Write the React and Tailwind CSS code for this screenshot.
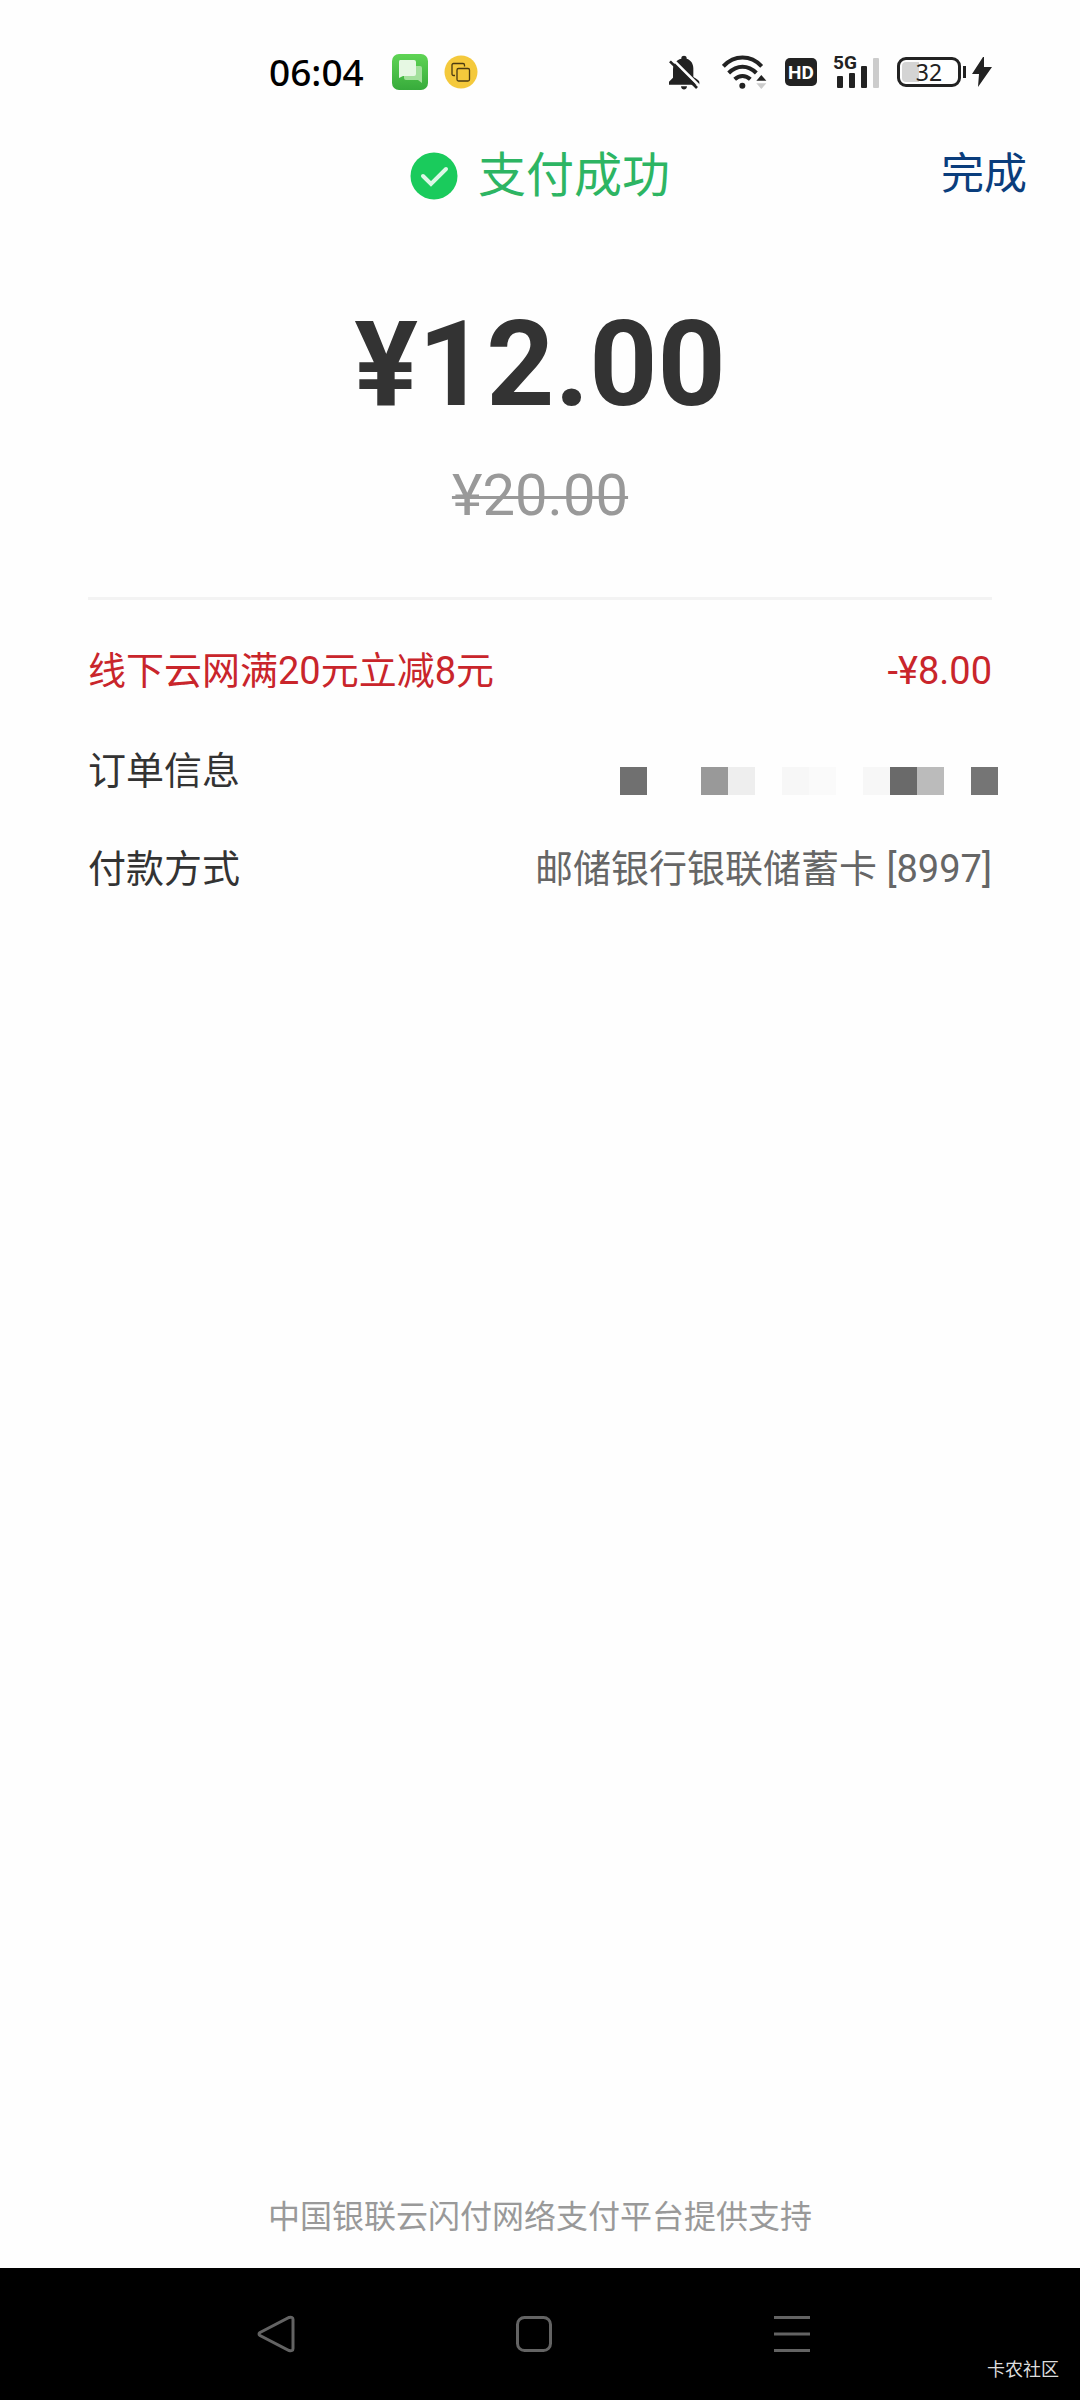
const mosaic = [
  'bg-[#707070]',
  '',
  '',
  'bg-[#999999]',
  'bg-[#eeeeee]',
  '',
  'bg-[#f7f7f7]',
  'bg-[#fafafa]',
  '',
  'bg-[#f7f7f7]',
  'bg-[#6a6a6a]',
  'bg-[#bbbbbb]',
  '',
  'bg-[#757575]',
];

function MessageIcon() {
  return (
    <svg viewBox="0 0 36 36" className="h-9 w-9">
      <defs>
        <linearGradient id="msg" x1="0" y1="0" x2="0" y2="1">
          <stop offset="0" stopColor="#5fd455" />
          <stop offset="1" stopColor="#37ab3b" />
        </linearGradient>
      </defs>
      <rect width="36" height="36" rx="7" fill="url(#msg)" />
      <path d="M14 12h14a2 2 0 0 1 2 2v15l-4-3H14a2 2 0 0 1-2-2V14a2 2 0 0 1 2-2z" fill="#a3e09c" />
      <path d="M8 6h14a2 2 0 0 1 2 2v12a2 2 0 0 1-2 2H11l-4 2V8a2 2 0 0 1 1-2z" fill="#e6f8e3" />
    </svg>
  );
}

function CopyIcon() {
  return (
    <svg viewBox="0 0 34 34" className="h-[34px] w-[34px]" fill="none" stroke="#4a3a12" strokeWidth="1.3">
      <circle cx="17" cy="17" r="16.5" fill="#f4c93c" stroke="none" />
      <path d="M11 20.500H9.500a1.500 1.500 0 0 1-1.500-1.500V10a1.500 1.500 0 0 1 1.500-1.500H19a1.500 1.500 0 0 1 1.500 1.500v1.500" />
      <rect x="13" y="13.500" width="12.500" height="12.500" rx="1.500" />
    </svg>
  );
}

function BellOffIcon() {
  return (
    <svg viewBox="57 42 96 105" className="h-[35px] w-8">
      <path
        d="M60 131v-9l12-12V86c0-17 9-29 25-33v-2c0-9 16-9 16 0v2c13 4 20 15 20 29v25c2 3 18 10 18 16v8z"
        fill="#222"
      />
      <path d="M96 136h18c-1 13-17 13-18 0z" fill="#222" />
      <path d="M66 50l90 90" stroke="#fff" strokeWidth="8" />
      <path d="M63 61l81 80" stroke="#222" strokeWidth="8" />
    </svg>
  );
}

function WifiIcon() {
  return (
    <svg viewBox="219 42 135 105" className="h-[35px] w-[45px]" fill="none" stroke="#222" strokeWidth="12">
      <path d="M223 76c33-35 82-35 115 0" />
      <path d="M239 96c25-25 58-25 83 0" />
      <path d="M257 115c14-13 33-13 47 0" />
      <circle cx="280" cy="134" r="9" fill="#222" stroke="none" />
      <path d="M322 119l15-17 15 17z" fill="#222" stroke="none" />
      <path d="M322 127l15 17 15-17z" fill="#ccc" stroke="none" />
    </svg>
  );
}

function SignalIcon() {
  return (
    <div className="relative h-[35px] w-12">
      <span className="absolute top-0 left-0 text-[19px] leading-4 font-bold">5G</span>
      <svg viewBox="0 0 48 35" className="h-full w-full" fill="#222">
        <rect x="4" y="21" width="6" height="12" rx="1" />
        <rect x="16" y="18" width="6" height="15" rx="1" />
        <rect x="28" y="11" width="6" height="22" rx="1" />
        <rect x="40" y="3" width="6" height="30" rx="1" fill="#ccc" />
      </svg>
    </div>
  );
}

function Battery() {
  return (
    <div className="flex items-center gap-[2px]">
      <div className="flex h-[30px] w-16 items-center justify-center rounded-[9px] border-[3px] border-[#222] bg-linear-to-r from-[#d4d4d4] from-32% to-white to-32% bg-clip-content p-[2px] font-['Noto_Sans'] text-[23px] leading-none">
        32
      </div>
      <div className="h-3 w-[3px] bg-[#222]" />
    </div>
  );
}

function StatusBar() {
  return (
    <header className="flex h-36 items-center justify-between pr-[88px] pl-[269px] text-[#222]">
      <div className="flex items-center">
        <time className="mr-7 font-['Noto_Sans'] text-[37px] leading-10 font-medium text-black">06:04</time>
        <div className="flex items-center gap-4">
          <MessageIcon />
          <CopyIcon />
        </div>
      </div>
      <div className="flex items-center">
        <BellOffIcon />
        <div className="ml-[22px]">
          <WifiIcon />
        </div>
        <div className="ml-[18px] flex h-7 w-8 items-center justify-center rounded-[5px] bg-[#222] text-[19px] leading-none font-bold text-white">
          HD
        </div>
        <div className="ml-4">
          <SignalIcon />
        </div>
        <div className="ml-4">
          <Battery />
        </div>
        <svg viewBox="0 0 20 32" className="ml-[6px] h-8 w-5" fill="#222">
          <path d="M11 1L0 18h7l-1 13L20 11h-8V1z" />
        </svg>
      </div>
    </header>
  );
}

function Row({ label, children, className = '' }) {
  return (
    <div className={`flex items-center justify-between text-[38px] leading-[42px] ${className}`}>
      <dt>{label}</dt>
      <dd>{children}</dd>
    </div>
  );
}

function NavBar() {
  return (
    <nav className="relative flex h-[132px] items-center justify-between bg-black pr-[269px] pl-[257px]">
      <button type="button" aria-label="返回">
        <svg viewBox="0 0 38 38" className="h-[38px] w-[38px]" fill="none" stroke="#636363" strokeWidth="3">
          <path d="M3 17.500L32 2.500q4-1 4 2v29q0 3-4 2L3 20.500q-2-1.500 0-3z" />
        </svg>
      </button>
      <button type="button" aria-label="主页">
        <svg viewBox="0 0 38 38" className="h-[38px] w-[38px]" fill="none" stroke="#636363" strokeWidth="3">
          <rect x="2.500" y="2.500" width="33" height="33" rx="7" />
        </svg>
      </button>
      <button type="button" aria-label="菜单">
        <svg viewBox="0 0 38 38" className="h-[38px] w-[38px]" stroke="#636363" strokeWidth="3">
          <path d="M1 2.500h36M1 19h36M1 35.500h36" />
        </svg>
      </button>
      <span className="absolute right-[21px] bottom-[18px] text-[18px] leading-6 text-[#dddddd]">卡农社区</span>
    </nav>
  );
}

function App() {
  return (
    <div className="flex min-h-screen flex-col bg-[#fefefe] font-[Roboto,'Noto_Sans_CJK_SC',sans-serif] text-[#333333]">
      <StatusBar />
      <main className="flex flex-1 flex-col">
        <div className="grid h-16 grid-cols-[1fr_auto_1fr] items-center">
          <h1 className="col-start-2 flex items-center gap-5 text-[48px] leading-[56px] text-[#2db563]">
            <svg viewBox="0 0 48 48" className="h-12 w-12" fill="none">
              <circle cx="24" cy="24" r="23.500" fill="#1acb5c" />
              <path d="M13 24l8 8L36 17" stroke="#dcf8e6" strokeWidth="4" strokeLinecap="round" />
            </svg>
            支付成功
          </h1>
          <button type="button" className="mr-[53px] self-start justify-self-end text-[43px] leading-[60px] text-[#0a3d7c]">
            完成
          </button>
        </div>
        <p className="mt-[87px] text-center text-[119px] leading-[140px] font-bold">¥12.00</p>
        <p className="mt-[26px] text-center text-[58px] leading-[68px] text-[#999999]">
          <s className="decoration-[3px]">¥20.00</s>
        </p>
        <dl className="mx-[88px] mt-[68px] flex flex-col border-t-[3px] border-[#f3f3f3] pt-[50px]">
          <Row label="线下云网满20元立减8元" className="text-[#c9252b]">
            -¥8.00
          </Row>
          <Row label="订单信息" className="mt-[55px]">
            <div className="-mr-[6px] grid h-12 w-[378px] grid-cols-14 pt-5">
              {mosaic.map((color, i) => (
                <span key={i} className={color} />
              ))}
            </div>
          </Row>
          <Row label="付款方式" className="mt-[53px]">
            <span className="text-[#666666]">邮储银行银联储蓄卡 [8997]</span>
          </Row>
        </dl>
        <p className="mt-auto mb-[30px] text-center text-[32px] leading-[42px] text-[#999999]">
          中国银联云闪付网络支付平台提供支持
        </p>
      </main>
      <NavBar />
    </div>
  );
}

export default App;
